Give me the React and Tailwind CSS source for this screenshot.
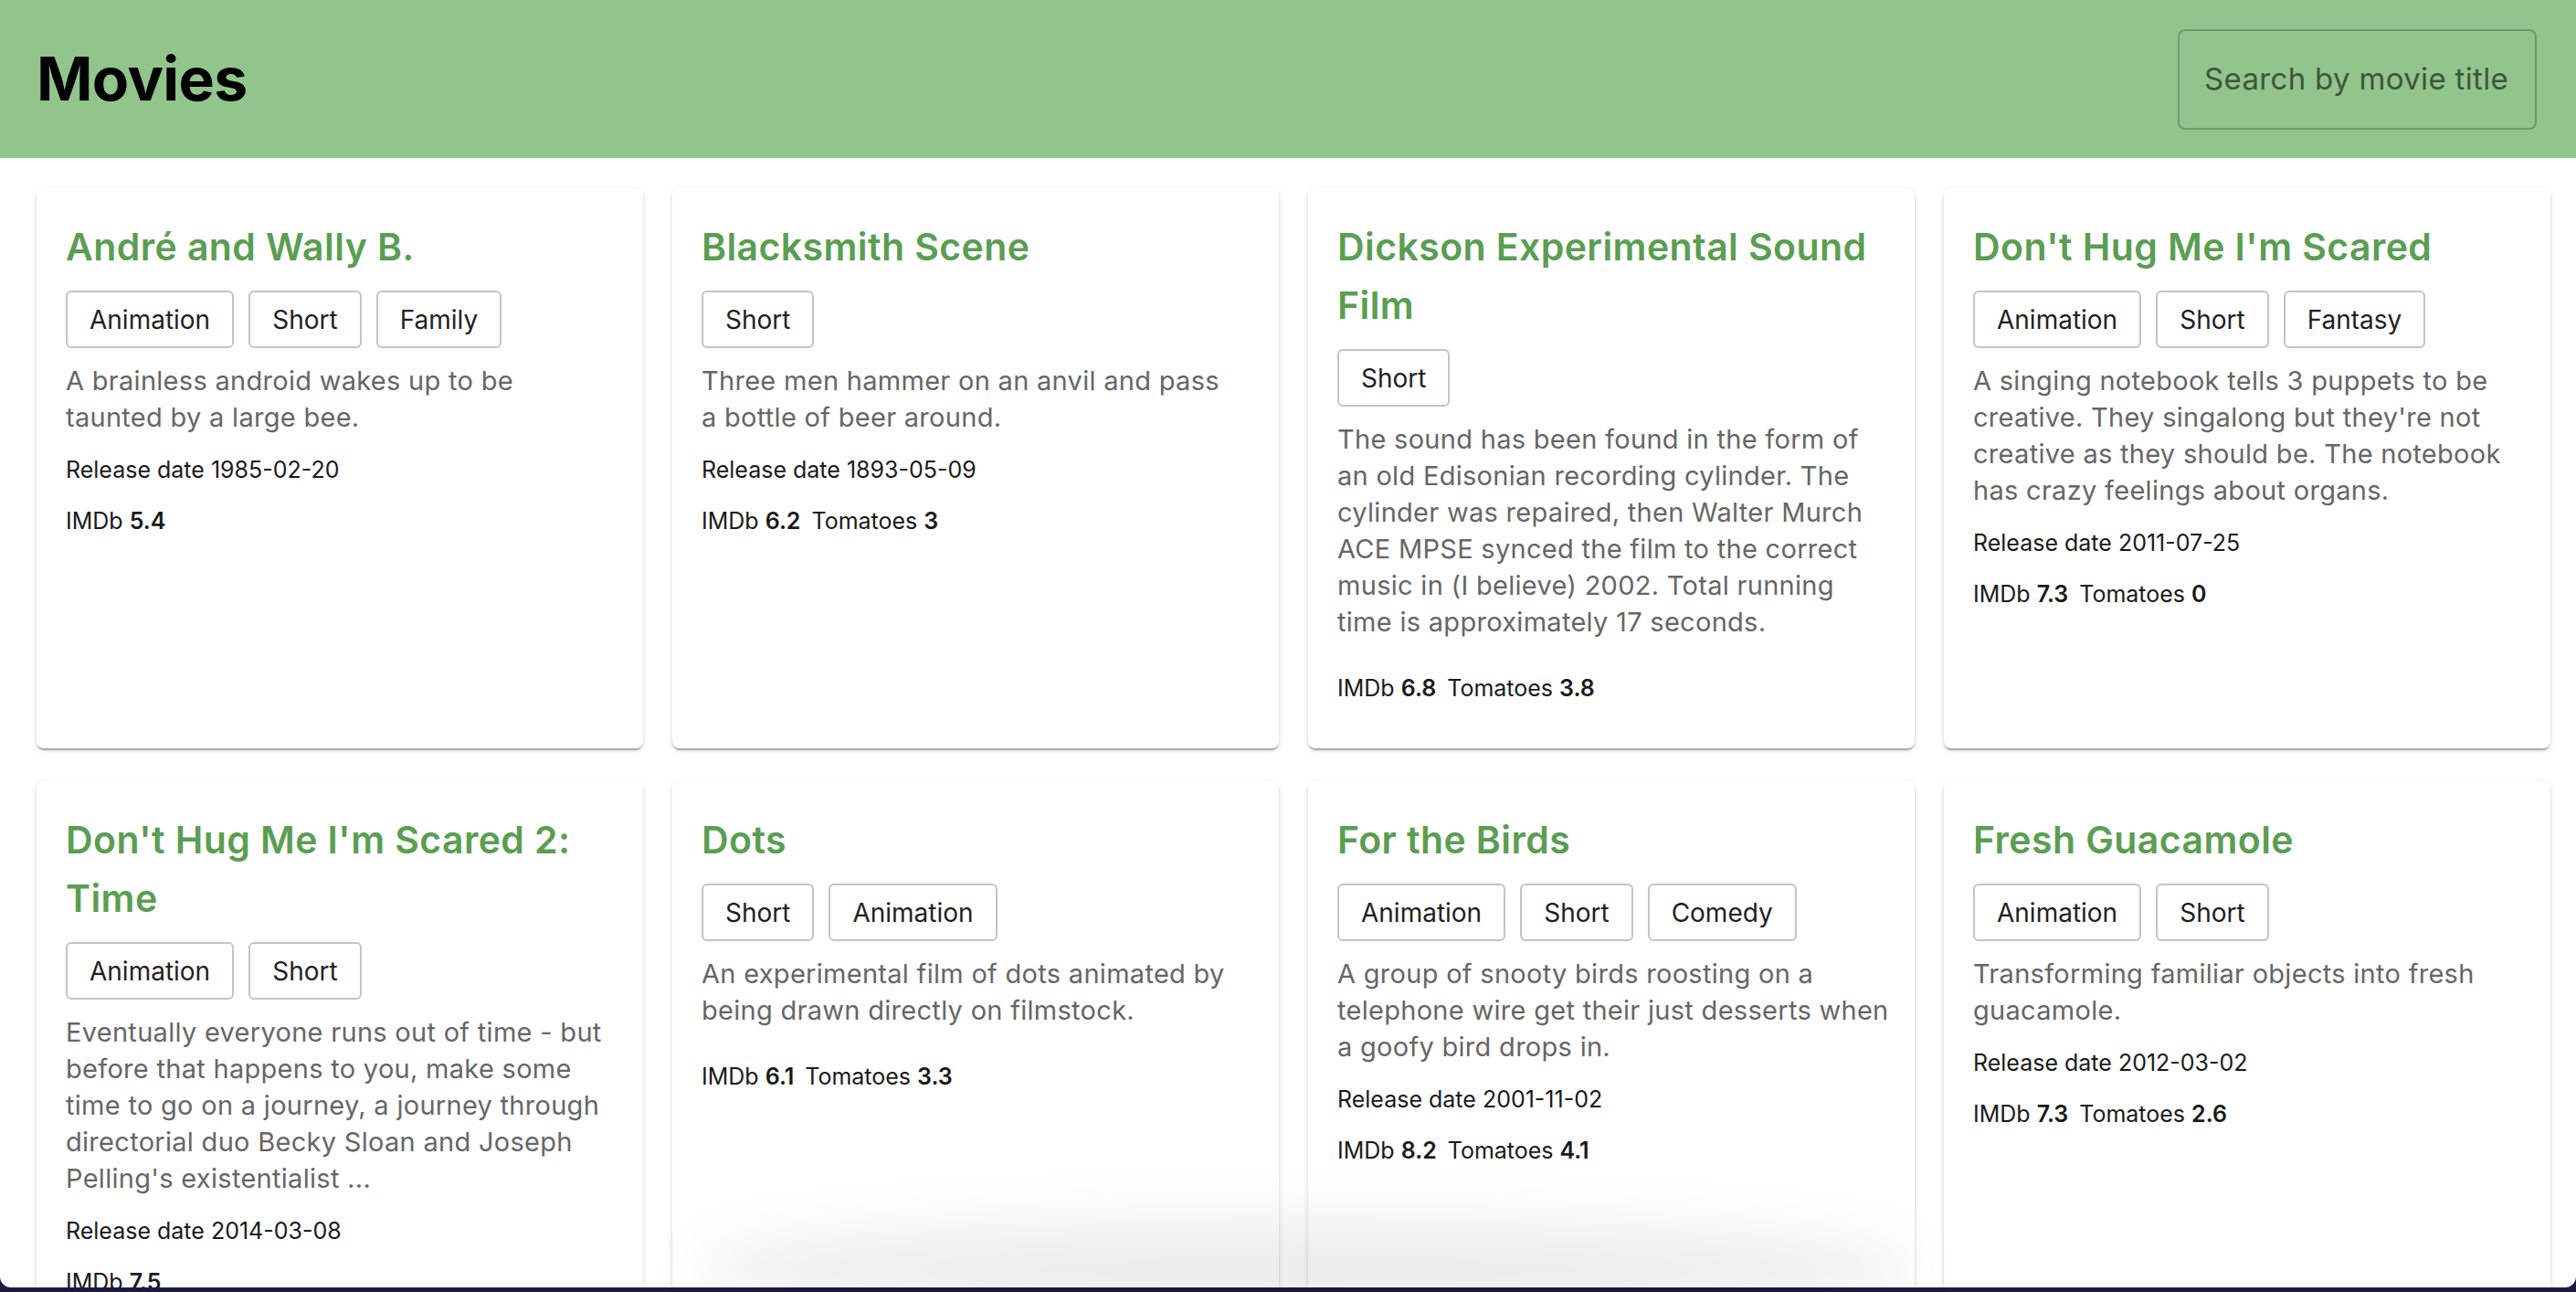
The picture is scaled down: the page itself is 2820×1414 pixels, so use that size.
import React from "react";

const movies = [
  {
    title: ["André and Wally B."],
    genres: ["Animation", "Short", "Family"],
    desc: ["A brainless android wakes up to be", "taunted by a large bee."],
    release: "1985-02-20",
    imdb: "5.4",
  },
  {
    title: ["Blacksmith Scene"],
    genres: ["Short"],
    desc: ["Three men hammer on an anvil and pass", "a bottle of beer around."],
    release: "1893-05-09",
    imdb: "6.2",
    tomatoes: "3",
  },
  {
    title: ["Dickson Experimental Sound", "Film"],
    genres: ["Short"],
    desc: [
      "The sound has been found in the form of",
      "an old Edisonian recording cylinder. The",
      "cylinder was repaired, then Walter Murch",
      "ACE MPSE synced the film to the correct",
      "music in (I believe) 2002. Total running",
      "time is approximately 17 seconds.",
    ],
    imdb: "6.8",
    tomatoes: "3.8",
  },
  {
    title: ["Don't Hug Me I'm Scared"],
    genres: ["Animation", "Short", "Fantasy"],
    desc: [
      "A singing notebook tells 3 puppets to be",
      "creative. They singalong but they're not",
      "creative as they should be. The notebook",
      "has crazy feelings about organs.",
    ],
    release: "2011-07-25",
    imdb: "7.3",
    tomatoes: "0",
  },
  {
    title: ["Don't Hug Me I'm Scared 2:", "Time"],
    genres: ["Animation", "Short"],
    desc: [
      "Eventually everyone runs out of time - but",
      "before that happens to you, make some",
      "time to go on a journey, a journey through",
      "directorial duo Becky Sloan and Joseph",
      "Pelling's existentialist ...",
    ],
    release: "2014-03-08",
    imdb: "7.5",
  },
  {
    title: ["Dots"],
    genres: ["Short", "Animation"],
    desc: ["An experimental film of dots animated by", "being drawn directly on filmstock."],
    imdb: "6.1",
    tomatoes: "3.3",
  },
  {
    title: ["For the Birds"],
    genres: ["Animation", "Short", "Comedy"],
    desc: [
      "A group of snooty birds roosting on a",
      "telephone wire get their just desserts when",
      "a goofy bird drops in.",
    ],
    release: "2001-11-02",
    imdb: "8.2",
    tomatoes: "4.1",
  },
  {
    title: ["Fresh Guacamole"],
    genres: ["Animation", "Short"],
    desc: ["Transforming familiar objects into fresh", "guacamole."],
    release: "2012-03-02",
    imdb: "7.3",
    tomatoes: "2.6",
  },
];

function MovieCard({ m }) {
  return (
    <div className="rounded-[8px] bg-white px-[32px] pt-[32px] pb-[48px] shadow-[0_4px_2px_-2px_rgba(0,0,0,0.2),0_2px_2px_0_rgba(0,0,0,0.14),0_2px_6px_0_rgba(0,0,0,0.12)]">
      <h2 className="text-[41px] leading-[64px] font-semibold tracking-[0.01em] text-[#5a9e52]">
        {m.title.map((t, i) => (
          <span key={i} className="block whitespace-nowrap">
            {t}
          </span>
        ))}
      </h2>
      <div className="mt-[16px] flex gap-[16px]">
        {m.genres.map((g) => (
          <div
            key={g}
            className="flex h-[63px] items-center rounded-[6px] border-2 border-[#c4c4c4] px-[24px] text-[28px] text-[#1f1f1f]"
          >
            {g}
          </div>
        ))}
      </div>
      <p className="mt-[16px] text-[29px] leading-[40px] tracking-[0.01em] text-[#666666]">
        {m.desc.map((d, i) => (
          <span key={i} className="block whitespace-nowrap">
            {d}
          </span>
        ))}
      </p>
      {m.release ? (
        <div className="mt-[19px] text-[25px] leading-[36px] text-[#1a1a1a]">
          Release date {m.release}
        </div>
      ) : (
        <div className="h-[14px]" />
      )}
      <div className="mt-[20px] flex text-[25px] leading-[36px] text-[#1a1a1a]">
        <span>
          IMDb <span className="font-semibold">{m.imdb}</span>
        </span>
        {m.tomatoes !== undefined && (
          <span className="ml-[12px]">
            Tomatoes <span className="font-semibold">{m.tomatoes}</span>
          </span>
        )}
      </div>
    </div>
  );
}

export default function App() {
  return (
    <div className="relative h-[1414px] w-[2820px] overflow-hidden bg-[#1c1a45] font-[Inter,sans-serif]">
      <div className="h-[1409px] overflow-hidden rounded-b-[12px] bg-white">
        <header className="flex h-[173px] items-center justify-between bg-[#92c58c] pl-[40px] pr-[43px]">
          <h1 className="text-[66px] font-bold tracking-[-0.01em] text-black">Movies</h1>
          <div className="flex h-[110px] w-[393px] items-center whitespace-nowrap rounded-[8px] border-2 border-[#70996c] pl-[27px] text-[33px] tracking-[0.01em] text-[#3d563b]">
            Search by movie title
          </div>
        </header>
        <main className="grid grid-cols-[repeat(4,664px)] items-stretch gap-x-[32px] gap-y-[36px] pl-[40px] pt-[33px]">
          {movies.map((m, i) => (
            <MovieCard key={i} m={m} />
          ))}
        </main>
      </div>
      <div className="pointer-events-none absolute bottom-[-30px] left-[760px] h-[110px] w-[1340px] rounded-[50%] bg-[rgba(0,0,0,0.07)] blur-[30px]" />
    </div>
  );
}
